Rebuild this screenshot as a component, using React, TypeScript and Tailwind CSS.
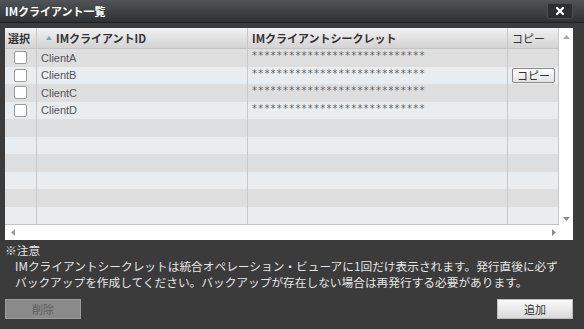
import React from 'react';

const jp = "font-['Noto_Sans_CJK_JP','Noto_Sans',sans-serif]";

const clients = ['ClientA', 'ClientB', 'ClientC', 'ClientD'];
const rows = Array.from({ length: 10 }, (_, i) => clients[i] ?? null);

const ClientListDialog = () => {
  return (
    <div className={`w-[584px] h-[329px] bg-[#3b3b3b] flex flex-col ${jp}`}>
      {/* title bar */}
      <div className="h-[23px] flex items-center justify-between pl-[5px] pr-[11px] bg-gradient-to-b from-[#505456] to-[#2f3234] border-b border-[#1e1e1e]">
        <span className="text-[11px] font-bold text-white leading-none">IMクライアント一覧</span>
        <div className="w-[26px] h-[16px] bg-[#2c2e30] border border-[#4a4c4e] rounded-[2px] flex items-center justify-center">
          <svg width="8" height="8" viewBox="0 0 8 8">
            <path d="M1 1 L7 7 M7 1 L1 7" stroke="#ffffff" strokeWidth="2.2" strokeLinecap="square" />
          </svg>
        </div>
      </div>

      <div className="px-[5px] pt-[5px] flex flex-col">
        {/* grid panel */}
        <div className="w-[568px] h-[212px] bg-white flex flex-col">
          <div className="flex flex-1">
            <div className="w-[554px] flex flex-col">
              <div className="h-[21px] flex bg-gradient-to-b from-[#f2f2f2] to-[#d3d3d3] text-[11px] font-bold text-[#333] border-b border-[#c4c4c4]">
                <div className="w-[32px] border-r border-[#c8c8c8] flex items-center pl-[3px]">選択</div>
                <div className="w-[211px] border-r border-[#c8c8c8] flex items-center pl-[9px] gap-[4px]">
                  <svg width="6" height="4" viewBox="0 0 6 4"><path d="M0 4 L3 0 L6 4 Z" fill="#7fa2c2" /></svg>
                  <span>IMクライアントID</span>
                </div>
                <div className="w-[260px] border-r border-[#c8c8c8] flex items-center pl-[4px]">IMクライアントシークレット</div>
                <div className="w-[51px] border-r border-[#c8c8c8] flex items-center pl-[4px] font-normal">コピー</div>
              </div>
              {rows.map((c, i) => (
                <div
                  key={i}
                  className={`h-[17.5px] flex ${i % 2 === 0 ? 'bg-[#dedede]' : 'bg-[#e9edf0]'}`}
                >
                  <div className="w-[32px] border-r border-[#c8c8c8] flex items-center justify-center">
                    {c && <div className="w-[13px] h-[13px] bg-white border border-[#9a9a9a] rounded-[2px]" />}
                  </div>
                  <div className="w-[211px] border-r border-[#c8c8c8] flex items-center pl-[4px] text-[11px] text-[#555] font-['Liberation_Sans',sans-serif]">
                    {c}
                  </div>
                  <div className="w-[260px] border-r border-[#c8c8c8] flex items-start pt-[1px] pl-[4px] text-[10px] leading-[12px] text-[#666] tracking-[1.2px] font-['DejaVu_Sans',sans-serif]">
                    {c && '****************************'}
                  </div>
                  <div className="w-[51px] border-r border-[#c8c8c8] flex items-center pl-[4px]">
                    {c === 'ClientB' && (
                      <div className="w-[43px] h-[15px] bg-gradient-to-b from-[#ffffff] to-[#e2e2e2] border border-[#8a8a8a] rounded-[2px] text-[11px] leading-none text-[#333] flex items-center justify-center">
                        コピー
                      </div>
                    )}
                  </div>
                </div>
              ))}
              <div className="flex-1 border-t border-[#c4c4c4]" />
            </div>
            {/* vertical scrollbar */}
            <div className="w-[14px] flex flex-col items-center justify-between pt-[7px] pb-[4px]">
              <svg width="7" height="4" viewBox="0 0 7 4"><path d="M0 4 L3.5 0 L7 4 Z" fill="#a9a9a9" /></svg>
              <svg width="7" height="4" viewBox="0 0 7 4"><path d="M0 0 L3.5 4 L7 0 Z" fill="#8c8c8c" /></svg>
            </div>
          </div>
          {/* horizontal scrollbar */}
          <div className="h-[15px] flex items-center">
            <div className="w-[554px] flex items-center justify-between pl-[6px] pr-[3px]">
              <svg width="4" height="7" viewBox="0 0 4 7"><path d="M4 0 L0 3.5 L4 7 Z" fill="#9a9a9a" /></svg>
              <svg width="4" height="7" viewBox="0 0 4 7"><path d="M0 0 L4 3.5 L0 7 Z" fill="#8c8c8c" /></svg>
            </div>
          </div>
        </div>

        {/* notice */}
        <div className="mt-[2px] text-[11.7px] leading-[16px] text-[#e6e6e6]">
          <div>※注意</div>
          <div className="pl-[10px]">IMクライアントシークレットは統合オペレーション・ビューアに1回だけ表示されます。発行直後に必ず</div>
          <div className="pl-[10px]">バックアップを作成してください。バックアップが存在しない場合は再発行する必要があります。</div>
        </div>

        {/* buttons */}
        <div className="mt-[9px] flex justify-between w-[568px]">
          <div className="w-[76px] h-[20px] bg-[#8a8a8a] border border-[#9c9c9c] flex items-center justify-center text-[11px] text-[#5e5e5e]">
            削除
          </div>
          <div className="w-[76px] h-[20px] bg-gradient-to-b from-[#fafafa] to-[#d9d9d9] border border-[#bdbdbd] flex items-center justify-center text-[11px] text-[#333]">
            追加
          </div>
        </div>
      </div>
    </div>
  );
};

export default function App() {
  return <ClientListDialog />;
}
